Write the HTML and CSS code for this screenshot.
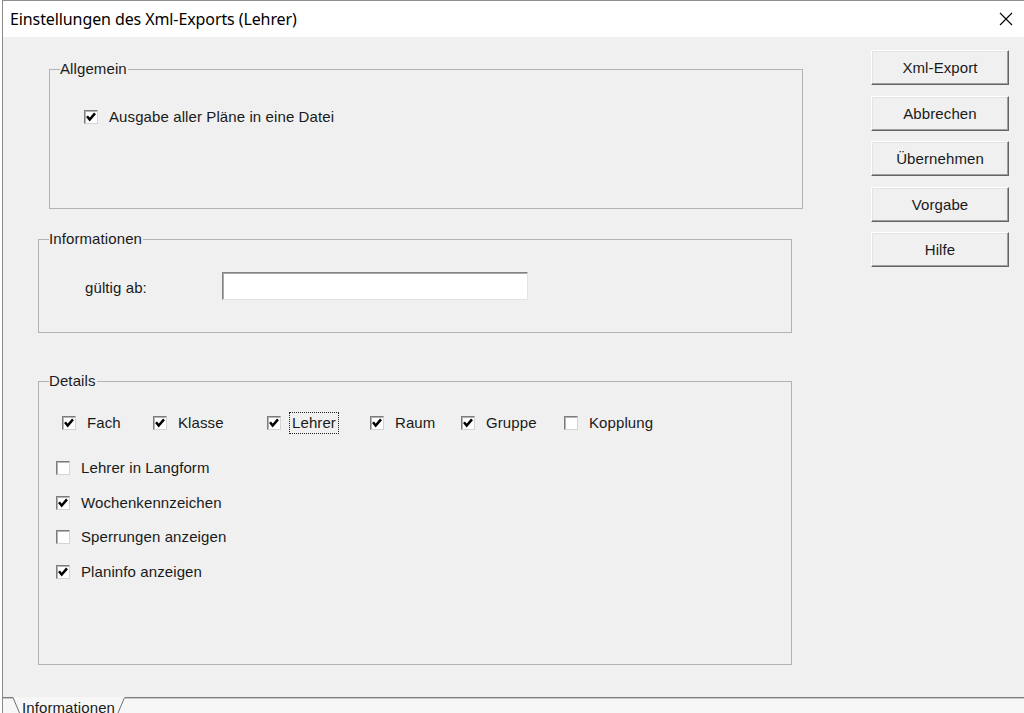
FILE: index.html
```html
<!DOCTYPE html>
<html lang="de">
<head>
<meta charset="utf-8">
<title>Einstellungen des Xml-Exports (Lehrer)</title>
<link rel="stylesheet" href="styles.css">
</head>
<body>
<div class="window">
  <div class="titlebar">
    <span class="title">Einstellungen des Xml-Exports (Lehrer)</span>
    <span class="close" aria-label="Schließen">
      <svg width="14" height="14" viewBox="0 0 14 14"><path d="M1 1 L13 13 M13 1 L1 13" stroke="#000" stroke-width="1.1" fill="none"/></svg>
    </span>
  </div>
  <div class="content">
    <div class="groups">
      <fieldset class="group group-allgemein">
        <legend>Allgemein</legend>
        <div class="group-body body-allgemein">
          <label class="cb-row">
            <span class="cb checked"></span><span class="cb-text">Ausgabe aller Pläne in eine Datei</span>
          </label>
        </div>
      </fieldset>
      <fieldset class="group group-info">
        <legend>Informationen</legend>
        <div class="group-body body-info">
          <span class="field-label">gültig ab:</span>
          <span class="input"></span>
        </div>
      </fieldset>
      <fieldset class="group group-details">
        <legend>Details</legend>
        <div class="group-body body-details">
          <div class="detail-grid">
            <label class="cb-row"><span class="cb checked"></span><span class="cb-text">Fach</span></label>
            <label class="cb-row"><span class="cb checked"></span><span class="cb-text">Klasse</span></label>
            <label class="cb-row"><span class="cb checked"></span><span class="cb-text focus">Lehrer</span></label>
            <label class="cb-row"><span class="cb checked"></span><span class="cb-text">Raum</span></label>
            <label class="cb-row"><span class="cb checked"></span><span class="cb-text">Gruppe</span></label>
            <label class="cb-row"><span class="cb"></span><span class="cb-text">Kopplung</span></label>
          </div>
          <div class="detail-list">
            <label class="cb-row"><span class="cb"></span><span class="cb-text">Lehrer in Langform</span></label>
            <label class="cb-row"><span class="cb checked"></span><span class="cb-text">Wochenkennzeichen</span></label>
            <label class="cb-row"><span class="cb"></span><span class="cb-text">Sperrungen anzeigen</span></label>
            <label class="cb-row"><span class="cb checked"></span><span class="cb-text">Planinfo anzeigen</span></label>
          </div>
        </div>
      </fieldset>
    </div>
    <div class="buttons">
      <button class="btn">Xml-Export</button>
      <button class="btn">Abbrechen</button>
      <button class="btn">Übernehmen</button>
      <button class="btn">Vorgabe</button>
      <button class="btn">Hilfe</button>
    </div>
  </div>
  <div class="tabbar">
    <span class="tab-line tab-line-left"></span>
    <span class="tab">
      <svg class="slant" width="7" height="16" viewBox="0 0 7 16"><path d="M0 0.5 L6.5 16" stroke="#6e6e6e" stroke-width="1" fill="none"/></svg>
      <span class="tab-text">Informationen</span>
      <svg class="slant" width="8" height="16" viewBox="0 0 8 16"><path d="M7.5 0.5 L1 16" stroke="#6e6e6e" stroke-width="1" fill="none"/></svg>
    </span>
    <span class="tab-line tab-line-right"></span>
  </div>
</div>
</body>
</html>
```
FILE: styles.css
```css
html, body {
  margin: 0;
  padding: 0;
  background: #ffffff;
}

body {
  width: 1024px;
  height: 713px;
  overflow: hidden;
  font-family: "Liberation Sans", Arial, sans-serif;
  font-size: 15px;
  letter-spacing: 0.1px;
  color: #1a1a1a;
}

.window {
  margin-left: 2px;
  height: 713px;
  border-left: 1px solid #8a8a8a;
  border-top: 1px solid #8e8e8e;
  box-sizing: border-box;
  display: flex;
  flex-direction: column;
  overflow: hidden;
}

.titlebar {
  height: 36px;
  flex: none;
  background: #ffffff;
  display: flex;
  align-items: center;
  padding-left: 7px;
}

.title {
  font-family: "Noto Sans", "Open Sans", sans-serif;
  font-size: 16px;
  letter-spacing: -0.1px;
  color: #000;
}

.close {
  margin-left: auto;
  width: 36px;
  height: 36px;
  display: flex;
  align-items: center;
  justify-content: center;
}

.content {
  height: 660px;
  flex: none;
  background: #f0f0f0;
  display: flex;
}

.groups {
  display: flex;
  flex-direction: column;
  align-items: flex-start;
}

.group {
  box-sizing: border-box;
  width: 754px;
  margin: 0;
  padding: 0;
  border: 1px solid #b2b2b2;
}

.group legend {
  padding: 0 1px 0 0;
  margin-left: 10px;
  line-height: 16px;
  font-size: 15px;
}

.group-allgemein {
  margin-left: 46px;
  margin-top: 24px;
  height: 148px;
}

.group-info {
  margin-left: 35px;
  margin-top: 22px;
  height: 102px;
}

.group-details {
  margin-left: 35px;
  margin-top: 40px;
  height: 292px;
}

.body-allgemein {
  padding: 32px 0 0 34px;
}

.body-info {
  display: flex;
  align-items: center;
  padding: 25px 0 0 46px;
}

.body-details {
  padding: 26px 0 0 17px;
}

.cb-row {
  display: flex;
  align-items: center;
  gap: 11px;
  height: 16px;
  white-space: nowrap;
}

.cb {
  box-sizing: border-box;
  width: 14px;
  height: 14px;
  flex: none;
  background: #ffffff;
  border-top: 1px solid #7c7c7c;
  border-left: 1px solid #7c7c7c;
  border-right: 1px solid #d4d4d4;
  border-bottom: 1px solid #d4d4d4;
  box-shadow: inset 1px 1px 0 #b4b4b4;
}

.cb.checked {
  background: #ffffff url("data:image/svg+xml,%3Csvg xmlns='http://www.w3.org/2000/svg' width='12' height='12' viewBox='0 0 12 12'%3E%3Cpath d='M2 5.2 L4.7 8.6 L10 2.4' stroke='%23000' stroke-width='2.5' fill='none'/%3E%3C/svg%3E") center/12px 12px no-repeat;
}

.cb-text {
  line-height: 16px;
}

.cb-text.focus {
  outline: 1px dotted #222;
  outline-offset: 2px;
}

.field-label {
  width: 137px;
  flex: none;
  padding-top: 3px;
}

.input {
  box-sizing: border-box;
  width: 306px;
  height: 28px;
  background: #ffffff;
  border-top: 1px solid #828282;
  border-left: 1px solid #828282;
  border-right: 1px solid #e3e3e3;
  border-bottom: 1px solid #e3e3e3;
  box-shadow: inset 1px 1px 0 #a9a9a9;
}

.detail-grid {
  display: grid;
  grid-template-columns: 91px 114px 103px 91px 103px auto;
  padding-left: 6px;
}

.detail-list {
  display: flex;
  flex-direction: column;
  gap: 18.7px;
  margin-top: 29px;
}

.buttons {
  margin-left: auto;
  margin-right: 15px;
  margin-top: 13px;
  display: flex;
  flex-direction: column;
  gap: 10.5px;
}

.btn {
  box-sizing: border-box;
  width: 138px;
  height: 35px;
  padding: 0;
  font-family: "Liberation Sans", Arial, sans-serif;
  font-size: 15px;
  letter-spacing: 0.1px;
  color: #1a1a1a;
  background: #f0f0f0;
  border-top: 1px solid #ffffff;
  border-left: 1px solid #ffffff;
  border-right: 1px solid #646464;
  border-bottom: 1px solid #646464;
  box-shadow: inset -1px -1px 0 #a0a0a0, inset 1px 1px 0 #e3e3e3;
}

.tabbar {
  height: 16px;
  flex: none;
  display: flex;
  background: #f7f7f7;
}

.tab-line {
  height: 16px;
  border-top: 1px solid #7d7d7d;
  background: linear-gradient(#c8c8c8 0 1px, #f7f7f7 1px);
  box-sizing: border-box;
}

.tab-line-left {
  width: 10px;
  flex: none;
}

.tab-line-right {
  flex: 1;
}

.tab {
  display: flex;
  align-items: flex-start;
}

.tab-text {
  padding: 3px 2px 0 2px;
  line-height: 16px;
  font-size: 15px;
}
```
